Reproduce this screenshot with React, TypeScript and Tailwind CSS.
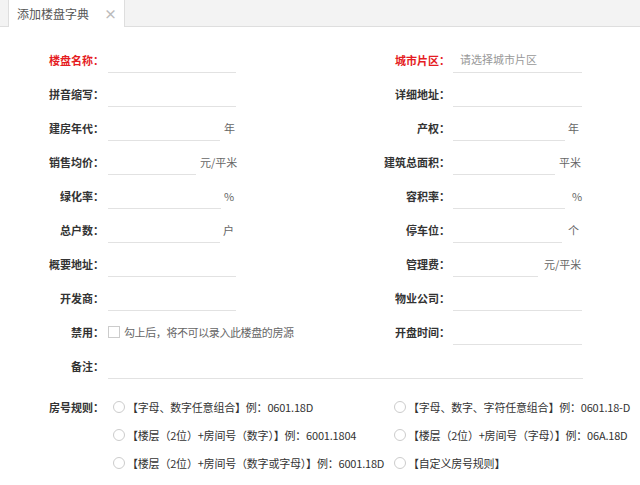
import React from "react";

type Unit = { w: number; unit: string; gap?: number };

function Field({ width, unit, placeholder }: { width: number; unit?: Unit; placeholder?: string }) {
  if (unit) {
    return (
      <div className="flex items-center" style={{ width }}>
        <div className="h-[26px] border-b border-[#e2e2e2] shrink-0" style={{ width: unit.w }} />
        <span className="text-[#666] text-[11px] whitespace-nowrap" style={{ marginLeft: unit.gap ?? 4 }}>{unit.unit}</span>
      </div>
    );
  }
  return (
    <div className="h-[26px] border-b border-[#e2e2e2] flex items-center pl-[7px] text-[11px] text-[#999]" style={{ width }}>
      {placeholder}
    </div>
  );
}

function Label({ text, red, className }: { text: string; red?: boolean; className: string }) {
  return (
    <div className={`${className} text-right text-[11px] font-bold whitespace-nowrap ${red ? "text-[#e51c23]" : "text-[#333]"}`}>
      {text}：
    </div>
  );
}

type Side = { label: string; red?: boolean; unit?: Unit; placeholder?: string };

const rows: [Side, Side][] = [
  [{ label: "楼盘名称", red: true }, { label: "城市片区", red: true, placeholder: "请选择城市片区" }],
  [{ label: "拼音缩写" }, { label: "详细地址" }],
  [{ label: "建房年代", unit: { w: 112, unit: "年" } }, { label: "产权", unit: { w: 112, unit: "年", gap: 3 } }],
  [{ label: "销售均价", unit: { w: 88, unit: "元/平米" } }, { label: "建筑总面积", unit: { w: 102, unit: "平米" } }],
  [{ label: "绿化率", unit: { w: 113, unit: "%", gap: 3 } }, { label: "容积率", unit: { w: 112, unit: "%", gap: 7 } }],
  [{ label: "总户数", unit: { w: 112, unit: "户", gap: 3 } }, { label: "停车位", unit: { w: 109, unit: "个", gap: 6 } }],
  [{ label: "概要地址" }, { label: "管理费", unit: { w: 85, unit: "元/平米", gap: 6 } }],
  [{ label: "开发商" }, { label: "物业公司" }],
];

function Radio({ text }: { text: string }) {
  return (
    <div className="flex items-center">
      <span className="w-[12px] h-[12px] rounded-full border border-[#ccc] bg-white shrink-0" />
      <span className="ml-[2px] text-[11px] text-[#333] whitespace-nowrap tracking-[-0.2px]">{text}</span>
    </div>
  );
}

export default function App() {
  return (
    <div className="w-[640px] h-[485px] bg-white overflow-hidden" style={{ fontFamily: '"Noto Sans CJK SC", "Noto Sans", sans-serif' }}>
      <div className="h-[27px] bg-[#f3f3f3] border-b border-[#dedede] flex pl-[8px]">
        <div className="w-[117px] h-[27px] bg-white border-x border-[#dedede] flex items-center pl-[8px] pr-[7px] justify-between">
          <span className="text-[12px] text-[#555]">添加楼盘字典</span>
          <span className="text-[13px] text-[#bbb] font-bold leading-none">×</span>
        </div>
      </div>

      <div className="pt-[16px]">
        {rows.map(([l, r], i) => (
          <div key={i} className="flex items-center h-[34px]">
            <Label text={l.label} red={l.red} className="w-[104px]" />
            <div className="ml-[4px]">
              <Field width={128} unit={l.unit} placeholder={l.placeholder} />
            </div>
            <Label text={r.label} red={r.red} className="w-[214px]" />
            <div className="ml-[3px]">
              <Field width={129} unit={r.unit} placeholder={r.placeholder} />
            </div>
          </div>
        ))}

        <div className="flex items-center h-[34px]">
          <Label text="禁用" className="w-[104px]" />
          <div className="ml-[4px] w-[128px] flex items-center">
            <span className="w-[12px] h-[12px] border border-[#ccc] shrink-0" />
            <span className="ml-[4px] text-[11px] text-[#666] whitespace-nowrap tracking-[-0.4px]">勾上后，将不可以录入此楼盘的房源</span>
          </div>
          <Label text="开盘时间" className="w-[214px]" />
          <div className="ml-[3px]">
            <Field width={129} />
          </div>
        </div>

        <div className="flex items-center h-[34px]">
          <Label text="备注" className="w-[104px]" />
          <div className="ml-[4px]">
            <Field width={475} />
          </div>
        </div>

        <div className="flex mt-[10px]">
          <div className="h-[28px] flex items-center">
            <Label text="房号规则" className="w-[104px]" />
          </div>
          <div className="ml-[9px] grid grid-cols-[281px_1fr] auto-rows-[28px] items-center">
            <Radio text="【字母、数字任意组合】例：0601.18D" />
            <Radio text="【字母、数字、字符任意组合】例：0601.18-D" />
            <Radio text="【楼层（2位）+房间号（数字）】例：6001.1804" />
            <Radio text="【楼层（2位）+房间号（字母）】例：06A.18D" />
            <Radio text="【楼层（2位）+房间号（数字或字母）】例：6001.18D" />
            <Radio text="【自定义房号规则】" />
          </div>
        </div>
      </div>
    </div>
  );
}
